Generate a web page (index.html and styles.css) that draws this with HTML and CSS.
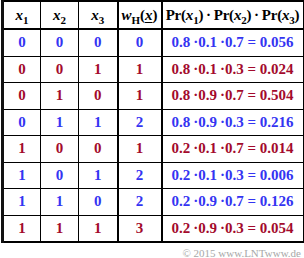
FILE: index.html
```html
<!DOCTYPE html>
<html>
<head>
<meta charset="utf-8">
<link rel="stylesheet" href="styles.css">
</head>
<body>
<div class="page">
<table class="tab">
  <colgroup>
    <col class="c1"><col class="c2"><col class="c3"><col class="c4"><col class="c5">
  </colgroup>
  <thead>
    <tr class="head">
      <th><i>x</i><sub>1</sub></th>
      <th><i>x</i><sub>2</sub></th>
      <th><i>x</i><sub>3</sub></th>
      <th class="sep"><i>w</i><sub class="up">H</sub>(<i class="vec">x</i>)</th>
      <th class="sep pr">Pr(<i>x</i><sub>1</sub>)&thinsp;·&thinsp;Pr(<i>x</i><sub>2</sub>)&thinsp;·&thinsp;Pr(<i>x</i><sub>3</sub>)</th>
    </tr>
  </thead>
  <tbody>
    <tr class="blue"><td>0</td><td>0</td><td>0</td><td class="sep">0</td><td class="sep">0.8&thinsp;·0.1&thinsp;·0.7 = 0.056</td></tr>
    <tr class="red"><td>0</td><td>0</td><td>1</td><td class="sep">1</td><td class="sep">0.8&thinsp;·0.1&thinsp;·0.3 = 0.024</td></tr>
    <tr class="red"><td>0</td><td>1</td><td>0</td><td class="sep">1</td><td class="sep">0.8&thinsp;·0.9&thinsp;·0.7 = 0.504</td></tr>
    <tr class="blue"><td>0</td><td>1</td><td>1</td><td class="sep">2</td><td class="sep">0.8&thinsp;·0.9&thinsp;·0.3 = 0.216</td></tr>
    <tr class="red"><td>1</td><td>0</td><td>0</td><td class="sep">1</td><td class="sep">0.2&thinsp;·0.1&thinsp;·0.7 = 0.014</td></tr>
    <tr class="blue"><td>1</td><td>0</td><td>1</td><td class="sep">2</td><td class="sep">0.2&thinsp;·0.1&thinsp;·0.3 = 0.006</td></tr>
    <tr class="blue"><td>1</td><td>1</td><td>0</td><td class="sep">2</td><td class="sep">0.2&thinsp;·0.9&thinsp;·0.7 = 0.126</td></tr>
    <tr class="red"><td>1</td><td>1</td><td>1</td><td class="sep">3</td><td class="sep">0.2&thinsp;·0.9&thinsp;·0.3 = 0.054</td></tr>
  </tbody>
</table>
<div class="copy">© 2015 www.LNTwww.de</div>
</div>
</body>
</html>
```

FILE: styles.css
```css
html, body {
  margin: 0;
  padding: 0;
  background: #ffffff;
}

.page {
  width: 304px;
  height: 258px;
  padding: 0 0 0 1px;
  box-sizing: border-box;
  font-family: "Liberation Serif", "Times New Roman", serif;
}

.tab {
  border-collapse: collapse;
  width: 301px;
  table-layout: fixed;
  border: 2px solid #000;
  border-left: 3px solid #111;
  font-size: 15px;
  font-weight: bold;
}

.c1 { width: 38px; }
.c2 { width: 38px; }
.c3 { width: 39px; }
.c4 { width: 44px; }
.c5 { width: 142px; }

.tab th,
.tab td {
  border: 1px solid #000;
  padding: 0;
  text-align: center;
  vertical-align: middle;
  line-height: 17px;
}

.tab .sep {
  border-left: 2px solid #000;
}

.head th {
  height: 26px;
  border-bottom: 2px solid #000;
  color: #000;
  font-weight: bold;
  font-size: 15px;
}

.head i {
  font-style: italic;
}

.head sub {
  font-size: 11px;
  vertical-align: -4px;
  line-height: 0;
  font-weight: bold;
}

.head .vec {
  text-decoration: underline;
  text-decoration-thickness: 1px;
  text-underline-offset: 2px;
}

.head .pr {
  font-size: 15px;
  letter-spacing: -0.2px;
}

.tab tbody td {
  height: 25.5px;
}

.blue td {
  color: #3434f2;
}

.red td {
  color: #a30a2c;
}

.copy {
  width: 300px;
  text-align: right;
  font-size: 11px;
  line-height: 13px;
  color: #a8a8a8;
  margin-top: 4px;
}
```
